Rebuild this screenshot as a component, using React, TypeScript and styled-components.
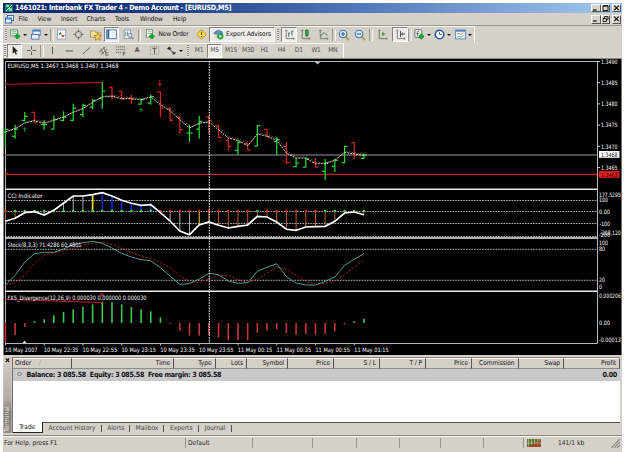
import React from "react";
import styled, { createGlobalStyle, css } from "styled-components";

const GlobalStyle = createGlobalStyle`
  * { box-sizing: border-box; }
  body { margin: 0; background: #fff; overflow: hidden; }
`;

const UI = `"DejaVu Sans Condensed", "DejaVu Sans", sans-serif`;

const Window = styled.div`
  width: 619px; height: 449px; margin: 3px 0 0 3px;
  display: flex; flex-direction: column;
  background: #d5d1c9; color: #111;
  font: 6.6px/9px ${UI}; font-stretch: condensed; white-space: nowrap;
`;
const TitleBar = styled.header`
  height: 10px; display: flex; align-items: center; padding: 0 1px 0 2px; gap: 2px;
  background: linear-gradient(90deg, #0b246b 0%, #1c3c83 25%, #5279b9 58%, #a3c9ef 100%);
  color: #fff; font-weight: bold; font-size: 7.2px; letter-spacing: -0.27px;
  > span { line-height: 8px; padding-bottom: 1px; }
`;
const Grow = styled.div`flex: 1;`;
const WinButtons = styled.div`display: flex; gap: 0; padding-right: 0;`;
const WinButton = styled.span<{ $gap?: boolean }>`
  width: 9.5px; height: 8.5px; background: #d8d4cc; display: grid; place-items: center;
  border: 1px solid; border-color: #fff #555 #555 #fff;
  margin-left: ${p => (p.$gap ? 1.5 : 0)}px;
`;
const MenuBar = styled.nav`
  height: 12.5px; display: flex; align-items: center; padding: 1px 1px 0 2px;
  border-bottom: 1px solid #9a978f;
`;
const MenuItem = styled.span<{ $w: number }>`width: ${p => p.$w}px; letter-spacing: -0.1px;`;
const MenuIcon = styled.span`width: 13.5px; display: flex;`;
const Toolbar = styled.div<{ $h: number; $w: number }>`
  height: ${p => p.$h}px; width: ${p => p.$w}px; display: flex; align-items: center;
  border-top: 1px solid #f7f5ef; border-right: 1px solid #fff;
`;
const Grip = styled.span<{ $w: number }>`
  width: ${p => p.$w}px; height: 12px; display: flex; justify-content: center;
  &::before { content: ""; width: 2px; background: repeating-linear-gradient(#8d8a82 0 1px, #e8e4dc 1px 2px); }
`;
const Separator = styled.span<{ $w: number }>`
  width: ${p => p.$w}px; height: 12px; display: flex; justify-content: center;
  &::before { content: ""; width: 2px; border-left: 1px solid #99968f; border-right: 1px solid #f6f4ee; }
`;
const Tool = styled.span<{ $w: number; $on?: boolean; $dim?: boolean }>`
  width: ${p => p.$w}px; height: 14.5px; display: flex; align-items: center; justify-content: center;
  gap: 2px; color: ${p => (p.$dim ? "#4e4c48" : "#111")};
  ${p => p.$on && css`
    background: #eeece7; border: 1px solid; border-color: #85827b #fff #fff #85827b;
  `}
`;
const ToolText = styled.span<{ $ls?: number }>`letter-spacing: ${p => p.$ls ?? -0.1}px;`;
const Drop = styled.i`
  width: 4px; border: solid transparent; border-width: 2px 2px 0; border-top-color: #111;
`;
const ChartPane = styled.div`height: 297px; background: #000; svg { display: block; }`;

const Terminal = styled.section`height: 78px; display: flex; padding-top: 2px;`;
const Side = styled.aside`
  width: 9px; display: flex; flex-direction: column; align-items: center; color: #111;
  font-size: 8px;
`;
const SideLabel = styled.div`
  flex: 1; width: 7.5px; writing-mode: vertical-rl; transform: rotate(180deg);
  background: linear-gradient(0deg, #cbc7bf 0, #b2aea8 50%, #807d79 70%, #8d8a86 100%); color: #e4e0da;
  font-size: 6.8px; line-height: 7.5px; padding-top: 1px;
`;
const Sheet = styled.div`
  width: 608px; display: flex; flex-direction: column; background: #fff;
  border-left: 1px solid #77746e; border-top: 1px solid #88857e;
`;
const HeadRow = styled.div`height: 10.5px; display: flex; flex: none;`;
const HeadCell = styled.span<{ $w: number; $left?: boolean }>`
  width: ${p => p.$w}px; padding: 0 3px 0 2px; text-align: ${p => (p.$left ? "left" : "right")};
  background: #d5d1c9; border-right: 1px solid #55534f; border-top: 1px solid #f7f5f1;
  border-bottom: 1px solid #8f8c86; line-height: 9.5px; letter-spacing: -0.08px; overflow: hidden;
  i { color: #9a9790; padding-left: 7px; }
`;
const BalanceRow = styled.div`
  height: 12px; flex: none; display: flex; align-items: center; background: #c9c9c9;
  padding: 0 3px 1px 4px; font-weight: bold; font-size: 7.1px; letter-spacing: -0.29px;
`;
const Bullet = styled.span`
  width: 4.5px; height: 4.5px; border: 1px solid #8b8b8b; border-radius: 50%; margin-right: 5px;
`;
const Blank = styled.div`flex: 1;`;
const Tabs = styled.div`
  height: 11.5px; display: flex; background: #d5d1c9; border-top: 1px solid #55534f; color: #444;
`;
const Tab = styled.span<{ $w: number; $on?: boolean }>`
  width: ${p => p.$w}px; text-align: center; line-height: 11px; letter-spacing: 0;
  ${p => p.$on
    ? css`background: #fff; margin-top: -1px; color: #111; border-right: 1px solid #222; border-bottom: 1px solid #222;`
    : css`background: linear-gradient(#55534f, #55534f) right 2px / 1px 7px no-repeat;`}
`;
const StatusBar = styled.footer`
  margin-top: 3px; height: 14px; display: flex; align-items: center; border-top: 1px solid #f7f5f1;
  box-shadow: 0 -1px 0 #8d8a83; color: #222; padding-bottom: 1px;
`;
const StatusCell = styled.span<{ $w: number; $pad?: number; $last?: boolean }>`
  width: ${p => p.$w}px; height: 10px; line-height: 10px; padding-left: ${p => p.$pad ?? 1}px;
  border-right: ${p => (p.$last ? 0 : 1)}px solid #98958e; display: flex; align-items: center; gap: 17px;
`;

/* ---------- toolbar icons, drawn on a 12 x 12 grid ---------- */
const Svg = ({ children, w = 11 }: { children: React.ReactNode; w?: number }) => (
  <svg width={w} height={w} viewBox="0 0 12 12" fill="none">{children}</svg>
);
const Plus = ({ x, y }: { x: number; y: number }) => (
  <path d={`M${x} ${y - 3}v6M${x - 3} ${y}h6`} stroke="#16a02a" strokeWidth="2.6" />
);
const NewChartIcon = () => <Svg><rect x=".8" y="1" width="7.5" height="6.5" fill="#f3faf3" stroke="#4a9563" /><path d="M2 3h5M2 5h5" stroke="#68aa78" /><Plus x={8} y={8} /></Svg>;
const ProfilesIcon = () => <Svg><rect x="2" y="1" width="8" height="6" fill="#e9f3ff" stroke="#4478ba" /><path d="M2 2h8" stroke="#4478ba" strokeWidth="1.6" /><rect x=".6" y="6" width="8" height="5" fill="#e9f3ff" stroke="#4478ba" /></Svg>;
const MarketIcon = () => <Svg><rect x="1.5" y="1" width="9" height="10" fill="#fff" stroke="#86a8cb" /><path d="M3 6L4.600 3l2 3z" fill="#149735" /><path d="M5.600 6.500h4L7.700 9.600z" fill="#d9322b" /></Svg>;
const TargetIcon = () => <Svg><circle cx="6" cy="6" r="3.4" stroke="#6a6862" /><path d="M6 0.500v3M6 8.500v3M.5 6h3M8.500 6h3" stroke="#6a6862" strokeWidth="1.1" /></Svg>;
const NavigatorIcon = () => <Svg w={12}><path d="M.6 2h4l1 1.3h4.6v5H.6z" fill="#f6e3a0" stroke="#a58847" strokeWidth=".8" /><path d="M7.8 4l1.1 2.4 2.6.3-1.9 1.8.5 2.7-2.3-1.3-2.4 1.3.5-2.7L4 6.7l2.6-.3z" fill="#ffd64a" stroke="#a5661a" strokeWidth=".7" /></Svg>;
const TerminalIcon = () => <Svg><rect x=".8" y="1" width="10.4" height="9.6" fill="#fff" stroke="#3d70b5" /><path d="M2.5 1v9" stroke="#2f66b4" strokeWidth="2.2" /><path d="M5 4h5M5 6.5h5" stroke="#c9dbef" strokeWidth=".8" /></Svg>;
const TesterIcon = () => <Svg><rect x="1.3" y="1" width="7" height="9.5" fill="#eef5fb" stroke="#8496a9" /><path d="M3 3v5M5 2.5v5" stroke="#6a8c76" /><circle cx="7.6" cy="7" r="2.2" fill="#d9ebf8" stroke="#6a7f94" /><path d="M9 8.6l2.4 2.6" stroke="#6a7f94" strokeWidth="1.4" /></Svg>;
const OrderIcon = () => <Svg><rect x="1.5" y=".8" width="6.5" height="8" fill="#fff" stroke="#6c8872" /><path d="M3 3h4M3 5h4" stroke="#709a7a" strokeWidth=".8" /><Plus x={7.5} y={8} /></Svg>;
const DiamondIcon = () => <Svg><path d="M6 .8L11.2 6 6 11.2.8 6z" fill="#ffdc42" stroke="#b98b12" /><path d="M6 3v3.4M6 7.6V9" stroke="#5e4600" strokeWidth="1.2" /></Svg>;
const ExpertIcon = () => <Svg><path d="M1 5.2C2 1 9 0 10.7 4.8L6.5 6.5z" fill="#5c8fd0" stroke="#315d9f" strokeWidth=".7" /><path d="M2.5 6v3.5L6 11V6" fill="#f0cf7e" /><circle cx="8" cy="8" r="3.4" fill="#21a340" /><path d="M7 6.3l2.8 1.7L7 9.8z" fill="#fff" /></Svg>;
const Axes = () => <path d="M2.5 1v9.5H11M1.2 2.4L2.5 1l1.3 1.4M9.7 9.2L11 10.5l-1.3 1" stroke="#6b6963" strokeWidth=".9" />;
const BarsIcon = () => <Svg><Axes /><path d="M5.2 4v4.5M5.2 4.5h1.4M8.6 2v5M8.6 2.5H10" stroke="#2d6b44" /></Svg>;
const CandleIcon = () => <Svg><Axes /><path d="M7.5 0v9" stroke="#146f2a" /><rect x="6" y="1.5" width="3" height="5.5" fill="#25a745" stroke="#146f2a" strokeWidth=".6" /></Svg>;
const LineIcon = () => <Svg><Axes /><path d="M3.5 8C5 4 6.5 3 8 5.2L10.5 7" stroke="#3b8352" /></Svg>;
const ZoomIcon = ({ plus }: { plus?: boolean }) => <Svg w={12}><path d="M7.7 7.7L11 11" stroke="#c39a34" strokeWidth="2" /><circle cx="5" cy="5" r="3.7" fill="#d9ebfc" stroke="#3c70bb" strokeWidth="1.1" /><path d={plus ? "M5 3v4M3 5h4" : "M3 5h4"} stroke="#295ba8" strokeWidth="1.1" /></Svg>;
const ScrollIcon = () => <Svg><Axes /><path d="M5.7 3v5L9 5.5z" fill="#2c9a46" /></Svg>;
const ShiftIcon = () => <Svg><Axes /><path d="M6 2v7M11 5.5H7M8.7 4L7 5.5 8.700 7" stroke="#444" /></Svg>;
const IndicatorIcon = () => <Svg><rect x="1" y=".8" width="7.5" height="8.5" rx="1" fill="#eee" stroke="#5e746a" /><path d="M5.5 2.5Q3.7 2 3.7 4v4M2.5 5h3" stroke="#444" strokeWidth=".8" /><Plus x={8} y={8.2} /></Svg>;
const ClockIcon = () => <Svg><circle cx="6" cy="6" r="4.7" fill="#f3f8ff" stroke="#2c58a8" strokeWidth="1.7" /><path d="M6 3.2V6h2.2" stroke="#444" strokeWidth=".9" /></Svg>;
const TemplateIcon = () => <Svg><rect x=".7" y="1.2" width="10.6" height="9.6" fill="#f2f8ff" stroke="#4d82bd" /><path d="M.7 2h10.6" stroke="#4d82bd" strokeWidth="1.8" /><path d="M2.3 5.7l2-1 2 1 3-1.5" stroke="#9a694a" strokeWidth=".8" /><path d="M2.3 9l2-1.3 2 1L9.5 7" stroke="#3b9d4e" strokeWidth=".8" /></Svg>;

const PointerIcon = () => <Svg><path d="M4 1v8.5l2-1.8 1.4 3 1.3-.6-1.3-2.9H10z" fill="#222" /></Svg>;
const G = "#5f5d58";
const CrossIcon = () => <Svg><path d="M6 1v4M6 7v4M1 6h4M7 6h4" stroke={G} strokeWidth="1.1" /></Svg>;
const VLineIcon = () => <Svg><path d="M6 2v8" stroke={G} strokeWidth="1.2" /></Svg>;
const HLineIcon = () => <Svg><path d="M2 6.5h8" stroke={G} strokeWidth="1.2" /></Svg>;
const TrendIcon = () => <Svg><path d="M2 10l8-7.5" stroke={G} /></Svg>;
const ChannelIcon = () => <Svg><path d="M1 8l7-6M3 10.5l7-6M3 4l3 6M6 2.5l3 6M8.5 8.5h3M8.5 11h3M8.6 8v3.5" stroke={G} strokeWidth=".9" /></Svg>;
const FiboIcon = () => <Svg><path d="M1 2h10M1 5h10M1 8h7" stroke={G} strokeDasharray="1.5 .7" /><path d="M9 11.5V8h2.3M9 9.8h2" stroke={G} strokeWidth=".9" /></Svg>;
const LabelIcon = () => <Svg><rect x="1.5" y="1.5" width="9" height="9" stroke="#8c8983" strokeDasharray="1 1" /><path d="M3.5 3.5h5M6 3.5V9.5" stroke={G} strokeWidth="1.2" /></Svg>;
const ArrowsIcon = () => <Svg><path d="M1 4l2.5-2.5L6 4 3.5 5.5zM6 8h5.2L8.7 11z" fill="#333" /><path d="M4 5l4 3" stroke="#333" /></Svg>;
const AppIcon = () => <svg width="8" height="8" viewBox="0 0 8 8"><rect width="8" height="8" fill="#167a6d" /><path d="M1 1h3v2H1zM4 4h3v3H4z" fill="#7cdc9e" /><path d="M1 7l6-6" stroke="#d4f7e2" /></svg>;
const MdiIcon = () => <svg width="9" height="9" viewBox="0 0 9 9" fill="#e7f2ff" stroke="#3870bd"><rect x="2.5" y=".5" width="6" height="5" /><rect x=".5" y="3" width="6" height="5" /><path d="M1 4h5" /></svg>;

const Glyph = ({ kind }: { kind: "min" | "max" | "restore" | "close" }) => (
  <svg width="7" height="6" viewBox="0 0 7 6" fill="none" stroke="#111">
    {kind === "min" && <path d="M1 5h3.5" strokeWidth="1.3" />}
    {kind === "max" && <path d="M1 .6h5v4.9H1zM1 1.2h5" strokeWidth=".9" />}
    {kind === "restore" && <path d="M2.5 2V.6H6v3H4.7M1 2.5h3.4v3H1z" strokeWidth=".9" />}
    {kind === "close" && <path d="M1.2.7l4.5 4.5M5.7.7L1.2 5.2" strokeWidth="1.2" />}
  </svg>
);
const Controls = ({ mid }: { mid: "max" | "restore" }) => (
  <WinButtons>
    <WinButton><Glyph kind="min" /></WinButton>
    <WinButton><Glyph kind={mid} /></WinButton>
    <WinButton $gap><Glyph kind="close" /></WinButton>
  </WinButtons>
);

/* ---------- chart data: one entry per five-minute bar ---------- */
const barX = (i: number) => 5.4 + i * 9.69;
const T = 58, L = 186;
const py = (base: number, v: number) => base + v / 3;
const poly = (base: number, vs: number[], d = 0) =>
  vs.map((v, i) => `${barX(i).toFixed(1)},${(py(base, v) + d).toFixed(1)}`).join(" ");

type Bar = [up: 0 | 1, high: number, low: number, open: number, close: number];
const bars: Bar[] = [
  [1,212,265,222,214],[1,200,242,235,213],[1,162,190,187,175],[0,162,193,163,192],[1,187,215,200,200],
  [1,173,215,213,185],[1,160,190,187,177],[1,137,190,187,150],[1,137,178,170,142],[1,123,153,147,127],
  [1,73,152,120,99],[0,86,125,87,115],[0,98,125,100,123],[0,110,138,120,124],[1,122,140,138,125],
  [1,110,140,135,116],[0,100,178,101,150],[0,148,190,153,187],[0,175,227,178,215],[1,200,252,225,225],
  [1,173,242,213,190],[0,173,227,177,187],[0,200,240,203,238],[0,240,277,248,265],[1,247,290,277,253],
  [0,253,277,257,276],[1,202,265,264,203],[0,213,238,214,236],[1,238,290,250,245],[0,252,317,265,314],
  [1,300,328,326,315],[1,300,328,327,303],[0,300,328,314,327],[1,303,367,340,315],[1,302,342,325,307],
  [1,263,316,314,265],[0,252,303,254,290],[1,287,303,301,292],
];
const ma = [222,212,195,188,196,187,177,163,152,133,117,115,122,122,125,117,140,158,185,210,196,192,215,240,247,263,228,235,247,285,300,300,317,317,307,283,288,292];
const cci = [106,97,80,77,87,73,52,30,30,26,20,30,43,52,58,56,80,105,135,146,117,108,118,126,121,117,91,93,108,130,133,123,122,121,106,81,78,86];
const stoch = [297,268,228,203,199,199,189,176,170,166,172,186,202,213,221,224,245,270,295,293,279,262,266,285,292,290,256,244,233,272,291,297,297,286,273,238,220,203];
const signal = [297,290,268,232,208,200,195,187,178,171,169,175,187,199,211,218,229,245,270,286,290,278,269,268,281,289,280,262,243,250,267,287,294,292,285,266,243,222];
const diverge = [468,448,423,406,400,388,378,370,362,355,349,349,355,363,370,376,394,414,434,449,449,447,455,463,463,463,440,434,430,441,446,444,446,444,436,415,406,398];
const cciColor = (i: number) =>
  i === 9 || i === 20 ? "#e8dc30" : i >= 10 && i <= 15 ? "#1821d8" : i < 2 || i > 20 ? "#b5603a" : "#a9a9a9";
const cciDot = (i: number) => ((i >= 16 && i <= 25) || (i >= 27 && i <= 32) || i === 0 ? "#e0282c" : "#35d84a");

const Txt = ({ x, y, w, children, fill = "#f8f8f8" }: { x: number; y: number; w: number; children: string; fill?: string }) => (
  <text x={x} y={y} textLength={w} lengthAdjust="spacingAndGlyphs" fill={fill}>{children}</text>
);
const times = ["10 May 2007", "10 May 22:35", "10 May 22:55", "10 May 23:15", "10 May 23:35", "10 May 23:55", "11 May 00:15", "11 May 00:35", "11 May 00:55", "11 May 01:15"];
const prices = ["1.3490", "1.3485", "1.3480", "1.3475", "1.3470", "1.3465"];

const Chart = () => (
  <svg width="619" height="297" viewBox="3 58 619 297" fontFamily="DejaVu Sans Condensed, DejaVu Sans, sans-serif" fontSize="6">
    <path d="M3 58.5h619" stroke="#8a8a84" />
    <path d="M3.5 58v297" stroke="#8a8a84" />
    <path d="M621.800 58v297" stroke="#d5d1c9" strokeWidth=".8" />
    <path d="M5 61.5H597.5V343.5H5.5V61" fill="none" stroke="#b6b6b6" />
    <path d="M5 155H597" stroke="#66666e" strokeWidth="1.400" />
    <path d="M5 174.4H597" stroke="#cc2020" strokeWidth="1.1" />
    <path d="M5 84.3L102.3 82.5" stroke="#c91d20" />
    {bars.map(([up, h, l, o, c], i) => {
      const x = barX(i);
      return (
        <path key={i} stroke={up ? "#25d937" : "#d9201e"} strokeWidth="1.25"
          d={`M${x} ${py(T, h)}V${py(T, l)}M${x - 3} ${py(T, o)}H${x}M${x} ${py(T, c)}h3`} />
      );
    })}
    <polyline points={poly(T, ma)} fill="none" stroke="#f0eccd" strokeWidth=".9" strokeDasharray="2 1" />
    <polyline points={poly(T, ma, -1)} fill="none" stroke="#c8b49c" strokeWidth=".5" strokeDasharray="1.5 1.5" transform="translate(1.500 0)" />
    <path d="M159.8 80v6M157.8 83.5l2 2.3 2-2.3" stroke="#d9201e" fill="none" />
    <path d="M24.6 132v-4M22.8 129.5l1.8-2 1.8 2M141 112v-3.500M139 110.500l2-2.300 2 2.300" stroke="#178d28" fill="none" />
    <path d="M314.500 61.500h6l-3 3z" fill="#c4c4c4" />

    <path d="M5 200.500H597M5 211.500H597M5 223.500H597M5 236.500H597M5 249.300H597M5 280.300H597" stroke="#bdbdbd" strokeWidth=".9" strokeDasharray="1.700 .98" />
    {cci.map((v, i) => (
      <g key={i}>
        <path d={`M${barX(i)} 211.300V${py(L, v)}`} stroke={cciColor(i)} strokeWidth={i >= 9 && i <= 15 ? 1.7 : 1} />
        <circle cx={barX(i)} cy="211" r="1.300" fill={cciDot(i)} />
      </g>
    ))}
    <polyline points={poly(L, cci)} fill="none" stroke="#fff" strokeWidth="1.700" />
    <path d="M5 189.300H597M5 238H597M5 291.300H597" stroke="#e9e9e9" strokeWidth="1.400" />
    <polyline points={poly(L, signal)} fill="none" stroke="#bd2428" strokeWidth=".85" strokeDasharray="2.300 1.500" />
    <polyline points={poly(L, stoch)} fill="none" stroke="#55a398" strokeWidth=".95" />

    {diverge.map((v, i) => (
      <path key={i} d={`M${barX(i)} 323V${py(L, v)}`} strokeWidth="1.600" stroke={v < 411 ? "#3fc84c" : "#c6343a"} />
    ))}
    <path d="M5 299.300L102.300 302.600" stroke="#c91d20" />
    <path d="M102 292.500v4M100 293.500l4 2.500M104 293.500l-4 2.500" stroke="#e3282c" strokeWidth=".8" />
    <path d="M22.500 343l2-2.500 2 2.500z" fill="#ddd" />
    <path d="M209.300 61V343" stroke="#f3f3f3" strokeWidth="1" strokeDasharray="1.700 .98" />

    <Txt x={7.5} y={68} w={111}>EURUSD,M5  1.3467 1.3468 1.3467 1.3468</Txt>
    <Txt x={7.5} y={198.300} w={35}>CCI Indicator</Txt>
    <Txt x={7.5} y={247} w={74}>Stock(8,3,3) 71.4286 60.4801</Txt>
    <Txt x={7.5} y={300} w={139}>FX5_Divergence(12,26,9) 0.000030 0.000000 0.000030</Txt>

    {times.map((t, i) => (
      <g key={i}>
        <path d={`M${5.500 + i * 38.760} 343v2.500`} stroke="#bbb" />
        <Txt x={5 + i * 38.800} y={351.700} w={i ? 34.500 : 32.500}>{t}</Txt>
      </g>
    ))}
    {prices.map((p, i) => (
      <g key={p}>
        <path d={`M597 ${61.500 + i * 21.200}h3`} stroke="#ccc" />
        <Txt x={601} y={63.900 + i * 21.150} w={16.500}>{p}</Txt>
      </g>
    ))}
    <rect x="599" y="151" width="20.500" height="6.800" fill="#fff" />
    <Txt x={601} y={156.500} w={16.500} fill="#111">1.3468</Txt>
    <rect x="599" y="171" width="20.500" height="6.800" fill="#e01b1b" />
    <Txt x={601} y={176.600} w={16.500} fill="#3a0000">1.3463</Txt>
    <Txt x={599} y={196.700} w={21.800}>177.5295</Txt>
    <Txt x={599} y={202.200} w={9}>100</Txt>
    <Txt x={599} y={213.500} w={11}>0.00</Txt>
    <Txt x={599.500} y={225.700} w={10.500}>-100</Txt>
    <Txt x={599} y={237.300} w={11}>-200</Txt>
    <Txt x={600} y={235.200} w={20.800}>-208.120</Txt>
    <Txt x={599} y={245} w={9}>100</Txt>
    <Txt x={599} y={251.200} w={6}>80</Txt>
    <Txt x={599} y={282.200} w={6}>20</Txt>
    <Txt x={599} y={288.700} w={3}>0</Txt>
    <Txt x={599} y={298.300} w={21.800}>0.000206</Txt>
    <Txt x={599} y={325.200} w={11}>0.00</Txt>
    <Txt x={599} y={341.900} w={21.800}>-0.00013</Txt>
  </svg>
);

const menus: [string, number][] = [["File", 19], ["View", 23.5], ["Insert", 25.5], ["Charts", 28.5], ["Tools", 25], ["Window", 33], ["Help", 20]];
const frames: [string, number][] = [["M15", 18], ["M30", 16], ["H1", 17], ["H4", 17], ["D1", 17.5], ["W1", 17], ["MN", 16.5]];
const columns: [string, number][] = [["Time", 102], ["Type", 41.5], ["Lots", 31.5], ["Symbol", 41], ["Price", 46], ["S / L", 46], ["T / P", 46], ["Price", 46], ["Commission", 46.5], ["Swap", 45.5], ["Profit", 56]];
const tabs: [string, number][] = [["Account History", 59], ["Alerts", 28.5], ["Mailbox", 34], ["Experts", 34.5], ["Journal", 33]];

export default function App() {
  return (
    <>
      <GlobalStyle />
      <Window>
        <TitleBar>
          <AppIcon />
          <span>1461021: Interbank FX Trader 4 - Demo Account - [EURUSD,M5]</span>
          <Grow />
          <Controls mid="max" />
        </TitleBar>
        <MenuBar>
          <MenuIcon><MdiIcon /></MenuIcon>
          {menus.map(([m, w]) => <MenuItem key={m} $w={w}>{m}</MenuItem>)}
          <Grow />
          <Controls mid="restore" />
        </MenuBar>
        <Toolbar $h={17} $w={472}>
          <Grip $w={5} />
          <Tool $w={21}><NewChartIcon /><Drop /></Tool>
          <Tool $w={21}><ProfilesIcon /><Drop /></Tool>
          <Separator $w={4} />
          <Tool $w={15}><MarketIcon /></Tool>
          <Tool $w={18}><TargetIcon /></Tool>
          <Tool $w={17}><NavigatorIcon /></Tool>
          <Tool $w={15} $on><TerminalIcon /></Tool>
          <Tool $w={19}><TesterIcon /></Tool>
          <Separator $w={3} />
          <Tool $w={52}><OrderIcon /><ToolText $ls={-0.17}>New Order</ToolText></Tool>
          <Tool $w={16}><DiamondIcon /></Tool>
          <Tool $w={66} $on><ExpertIcon /><ToolText $ls={-0.1}>Expert Advisors</ToolText></Tool>
          <Grip $w={6} />
          <Tool $w={16} $on><BarsIcon /></Tool>
          <Tool $w={17}><CandleIcon /></Tool>
          <Tool $w={18}><LineIcon /></Tool>
          <Separator $w={4} />
          <Tool $w={15}><ZoomIcon plus /></Tool>
          <Tool $w={18}><ZoomIcon /></Tool>
          <Separator $w={4} />
          <Tool $w={19}><ScrollIcon /></Tool>
          <Tool $w={16} $on><ShiftIcon /></Tool>
          <Separator $w={4} />
          <Tool $w={20}><IndicatorIcon /><Drop /></Tool>
          <Tool $w={21}><ClockIcon /><Drop /></Tool>
          <Tool $w={21}><TemplateIcon /><Drop /></Tool>
        </Toolbar>
        <Toolbar $h={15.5} $w={341}>
          <Grip $w={4} />
          <Tool $w={15} $on><PointerIcon /></Tool>
          <Tool $w={18}><CrossIcon /></Tool>
          <Separator $w={4} />
          <Tool $w={17}><VLineIcon /></Tool>
          <Tool $w={17}><HLineIcon /></Tool>
          <Tool $w={17}><TrendIcon /></Tool>
          <Tool $w={17}><ChannelIcon /></Tool>
          <Tool $w={17}><FiboIcon /></Tool>
          <Tool $w={16} $dim><b>A</b></Tool>
          <Tool $w={18}><LabelIcon /></Tool>
          <Tool $w={22}><ArrowsIcon /><Drop /></Tool>
          <Grip $w={6} />
          <Tool $w={16} $dim><ToolText $ls={-0.2}>M1</ToolText></Tool>
          <Tool $w={15} $on $dim><ToolText $ls={-0.2}>M5</ToolText></Tool>
          {frames.map(([f, w]) => <Tool key={f} $w={w} $dim><ToolText $ls={-0.25}>{f}</ToolText></Tool>)}
        </Toolbar>
        <ChartPane><Chart /></ChartPane>
        <Terminal>
          <Side>
            <svg width="5" height="7" viewBox="0 0 5 7"><path d="M.8 1.500l3.400 3.500M4.200 1.500L.8 5" stroke="#111" strokeWidth="1.100" /></svg>
            <SideLabel>Terminal</SideLabel>
          </Side>
          <Sheet>
            <HeadRow>
              <HeadCell $w={59} $left>Order<i>∕</i></HeadCell>
              {columns.map(([c, w], i) => <HeadCell key={i} $w={w}>{c}</HeadCell>)}
            </HeadRow>
            <BalanceRow>
              <Bullet />
              <span>Balance: 3 085.58&nbsp; Equity: 3 085.58&nbsp; Free margin: 3 085.58</span>
              <Grow />
              <span>0.00</span>
            </BalanceRow>
            <Blank />
            <Tabs>
              <Tab $w={29.5} $on>Trade</Tab>
              {tabs.map(([t, w]) => <Tab key={t} $w={w}>{t}</Tab>)}
            </Tabs>
          </Sheet>
        </Terminal>
        <StatusBar>
          <StatusCell $w={183}>For Help, press F1</StatusCell>
          <StatusCell $w={66.5} $pad={2}>Default</StatusCell>
          <StatusCell $w={60} />
          <StatusCell $w={44} />
          <StatusCell $w={43} />
          <StatusCell $w={41.500} />
          <StatusCell $w={43} />
          <StatusCell $w={40} />
          <StatusCell $w={87} $pad={3} $last>
            <svg width="14" height="8" viewBox="0 0 14 8"><rect width="14" height="8" fill="#5d7038" /><path d="M1.500 0v8M4.500 0v8M7.500 0v8M10.500 0v8M13 0v8" stroke="#a8bd65" strokeWidth=".8" /><path d="M0 8L14 1v7z" fill="#b32f25" opacity=".7" /><path d="M0 4h14" stroke="#d5d1c9" strokeWidth=".6" /></svg>
            <span>141/1 kb</span>
          </StatusCell>
          <svg width="9" height="10" viewBox="0 0 9 10"><path d="M0 10L9 1M3 10l6-6M6 10l3-3" stroke="#8e8b85" strokeWidth="1.100" /></svg>
        </StatusBar>
      </Window>
    </>
  );
}
